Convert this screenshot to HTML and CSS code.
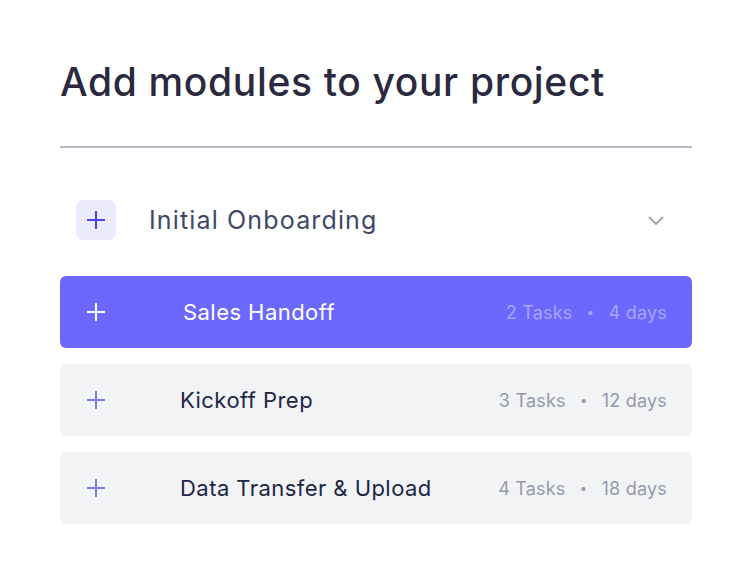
FILE: index.html
```html
<!DOCTYPE html>
<html>
<head>
  <meta charset="utf-8">
  <meta name="viewport" content="width=device-width">
  <title>Add modules</title>
  <link rel="stylesheet" href="styles.css">
</head>
<body>
<main class="panel">
  <h1 class="title">Add modules to your project</h1>
  <hr class="divider">

  <section class="group">
    <div class="group-head">
      <span class="group-icon">
        <svg width="18" height="18" viewBox="0 0 18 18"><path d="M9 0V18M0 9H18" stroke="#4b44f6" stroke-width="2"/></svg>
      </span>
      <span class="group-name">Initial Onboarding</span>
      <svg class="chevron" width="16" height="9" viewBox="0 0 16 9"><path d="M1 1L8 8L15 1" fill="none" stroke="#a3a7b6" stroke-width="2"/></svg>
    </div>

    <div class="module active">
      <svg class="plus" width="18" height="18" viewBox="0 0 18 18"><path d="M9 0V18M0 9H18" stroke="#fff" stroke-width="2"/></svg>
      <span class="module-name">Sales Handoff</span>
      <span class="meta">2 Tasks <i>•</i> 4 days</span>
    </div>

    <div class="module">
      <svg class="plus" width="18" height="18" viewBox="0 0 18 18"><path d="M9 0V18M0 9H18" stroke="#7d78f6" stroke-width="2"/></svg>
      <span class="module-name">Kickoff Prep</span>
      <span class="meta">3 Tasks <i>•</i> 12 days</span>
    </div>

    <div class="module">
      <svg class="plus" width="18" height="18" viewBox="0 0 18 18"><path d="M9 0V18M0 9H18" stroke="#7d78f6" stroke-width="2"/></svg>
      <span class="module-name">Data Transfer &amp; Upload</span>
      <span class="meta">4 Tasks <i>•</i> 18 days</span>
    </div>
  </section>
</main>
</body>
</html>
```

FILE: styles.css
```css
* {
  box-sizing: border-box;
}

body {
  margin: 0;
  background: #fff;
  font-family: Inter, "Noto Sans", sans-serif;
}

.panel {
  width: 632px;
  margin-left: 60px;
  padding-top: 58px;
}

.title {
  margin: 0;
  font-size: 39px;
  font-weight: 500;
  line-height: 48px;
  color: #2a2940;
  letter-spacing: 0.65px;
}

.divider {
  margin: 40px 0 0;
  border: 0;
  height: 2px;
  background: #b8bac6;
}

.group {
  display: flex;
  flex-direction: column;
  gap: 16px;
  padding-top: 52px;
}

.group-head {
  display: flex;
  align-items: center;
  height: 40px;
  padding-left: 16px;
  margin-bottom: 20px;
}

.group-icon {
  width: 40px;
  height: 40px;
  border-radius: 8px;
  background: #ebebfd;
  display: flex;
  align-items: center;
  justify-content: center;
}

.group-name {
  margin-left: 33px;
  font-size: 25px;
  letter-spacing: 1.15px;
  color: #3e4866;
  flex: 1;
}

.chevron {
  margin-right: 28px;
}

.module {
  display: flex;
  align-items: center;
  height: 72px;
  border-radius: 6px;
  background: #f2f3f5;
  padding: 0 25px 0 27px;
}

.plus {
  flex: none;
}

.module-name {
  flex: 1;
  margin-left: 75px;
  font-size: 22px;
  letter-spacing: 0.45px;
  color: #1e2646;
}

.meta {
  font-size: 18px;
  letter-spacing: 0.2px;
  color: #9599a9;
}

.meta i {
  font-style: normal;
  font-size: 13px;
  margin: 0 9px;
  position: relative;
  top: -2px;
}

.module.active {
  background: #6c68fe;
}

.module.active .module-name {
  color: #fff;
  margin-left: 78px;
}

.module.active .meta {
  color: #a8a5ff;
}
```
